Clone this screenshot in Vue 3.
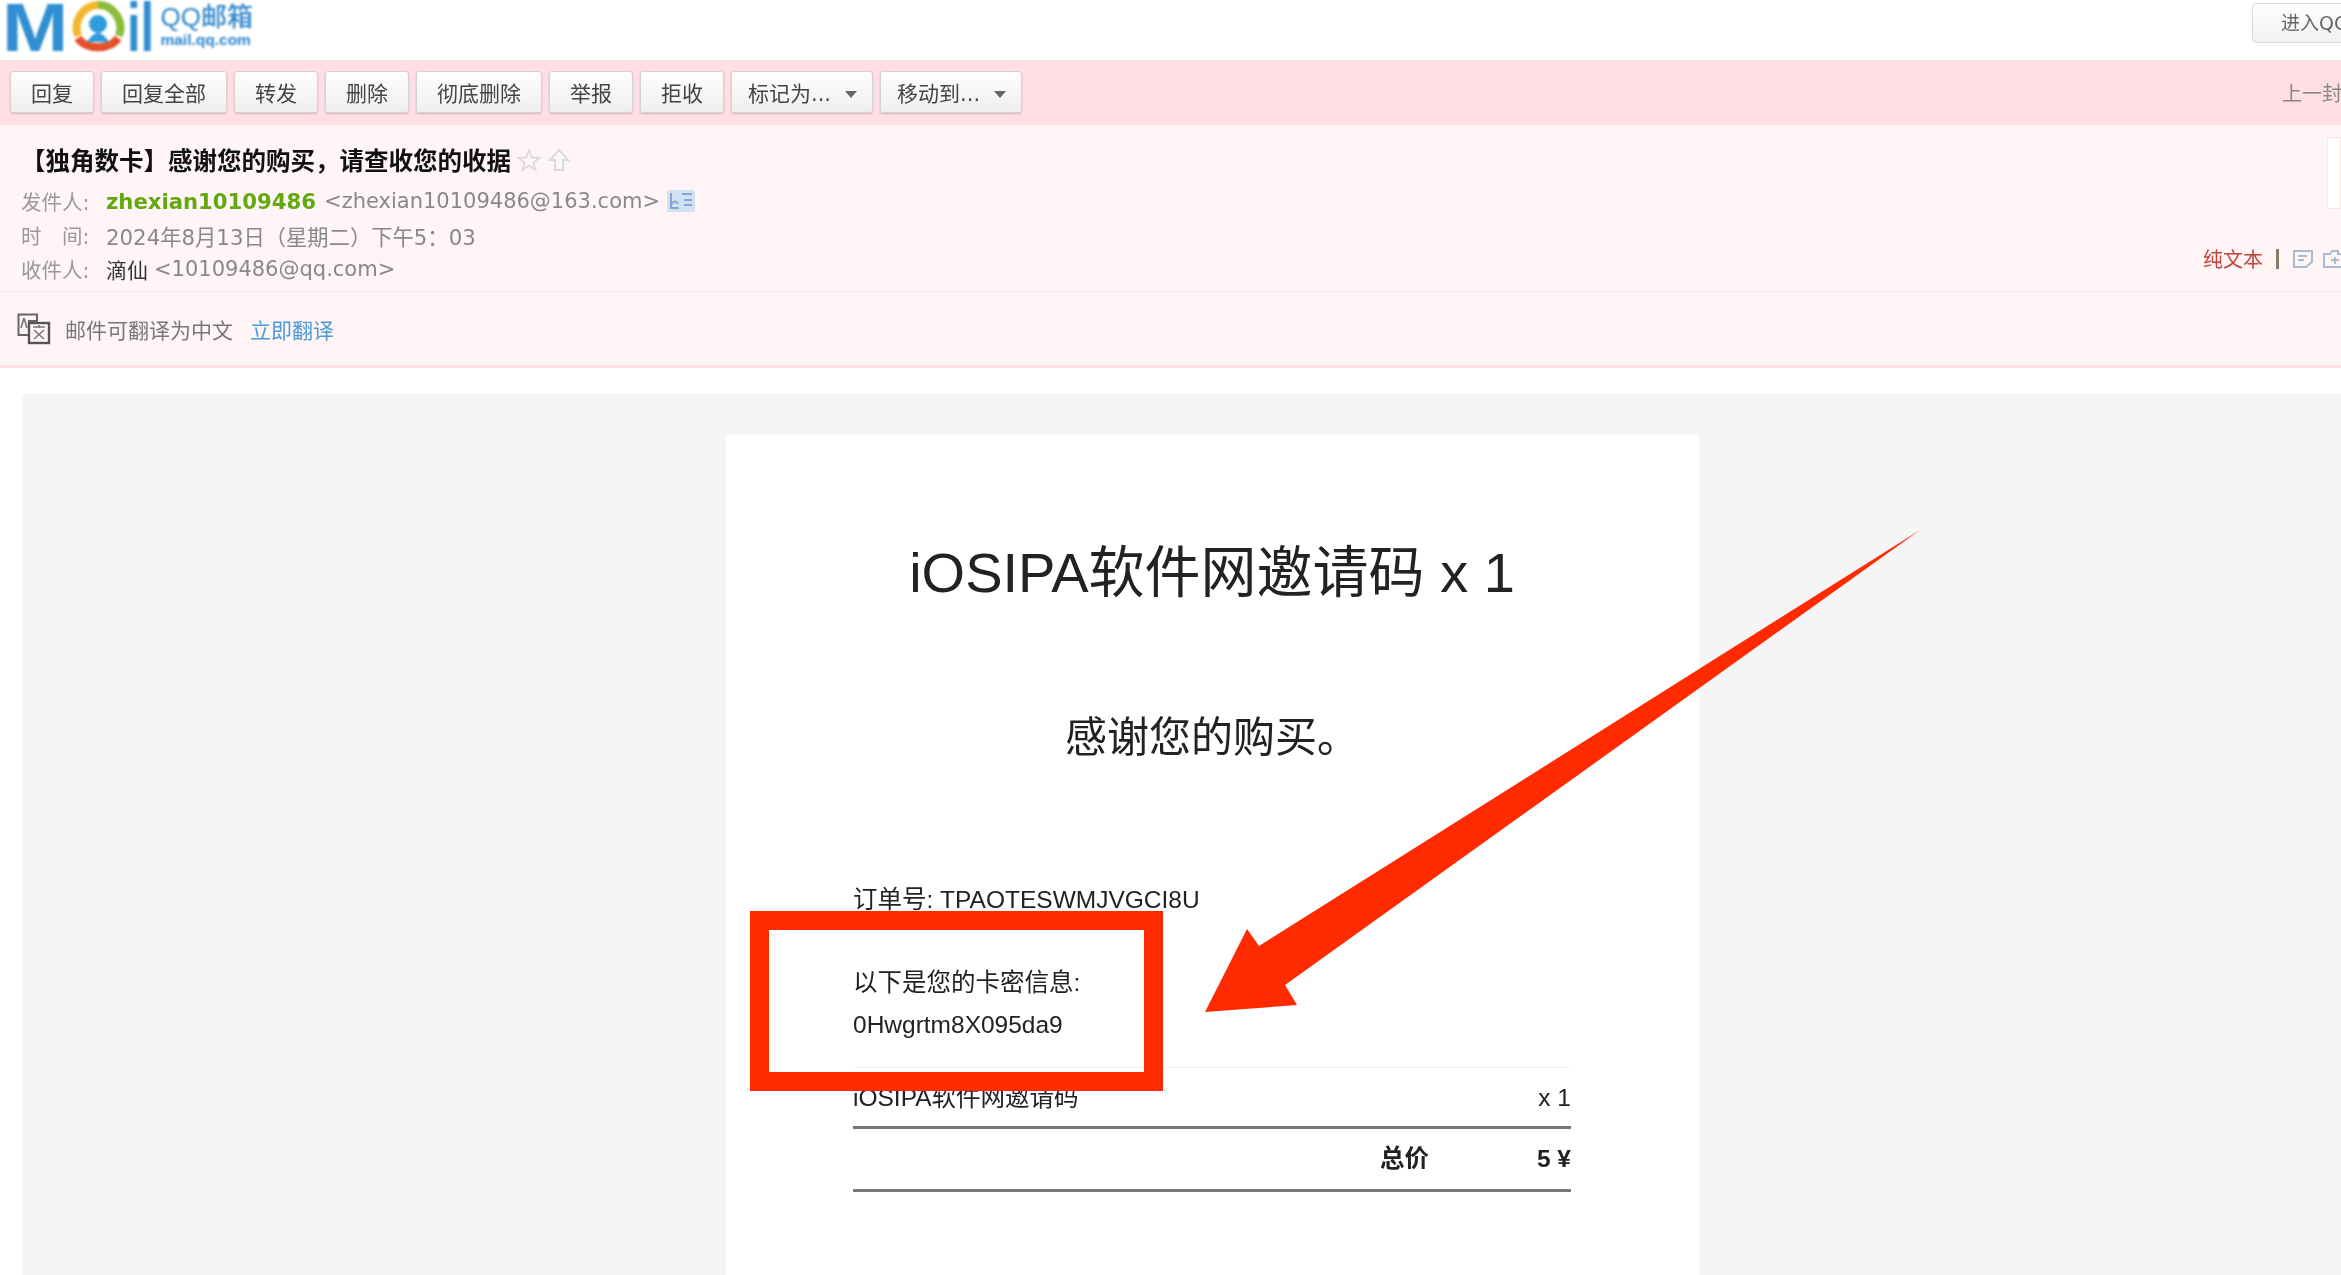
<template>
  <div class="page">
    <!-- Logo row -->
    <header class="top">
      <div class="logo">
        <span class="logo-m">M</span>
        <svg class="logo-ring" width="58" height="56" viewBox="0 0 52 56">
          <path d="M26 5 A22 23 0 0 1 47 36" fill="none" stroke="#8cbb3c" stroke-width="8" />
          <path d="M26 5 A22 23 0 0 0 6 36" fill="none" stroke="#f3b72c" stroke-width="8" />
          <path d="M6 38 A22 16 0 0 0 46 38" fill="none" stroke="#e4502a" stroke-width="8" />
          <circle cx="26" cy="24" r="9" fill="#2f9bdc" />
          <path d="M15 42 Q26 24 37 42 Z" fill="#2f9bdc" />
        </svg>
        <span class="logo-il">il</span>
        <div class="logo-side">
          <div class="logo-name">QQ邮箱</div>
          <div class="logo-url">mail.qq.com</div>
        </div>
      </div>
      <div class="enter-btn">进入QQ邮箱</div>
    </header>

    <!-- Toolbar -->
    <nav class="toolbar">
      <div class="tool-list">
        <button v-for="b in buttons" :key="b.label" class="tool-btn" :class="{ menu: b.menu }">
          {{ b.label }}<i v-if="b.menu" class="caret"></i>
        </button>
      </div>
      <span class="prev">上一封</span>
    </nav>

    <!-- Mail meta -->
    <section class="meta">
      <div class="meta-main">
        <h1 class="subject">
          【独角数卡】感谢您的购买，请查收您的收据
          <svg class="subject-icon" width="26" height="26" viewBox="0 0 24 24">
            <path d="M12 3 L14.6 9.6 L21.5 10 L16.2 14.4 L18 21 L12 17.3 L6 21 L7.8 14.4 L2.5 10 L9.4 9.6 Z" fill="none" stroke="#d9d9d9" stroke-width="1.6" />
          </svg>
          <svg class="subject-icon" width="24" height="26" viewBox="0 0 24 26">
            <path d="M12 3 L21 13 H16 V23 H8 V13 H3 Z" fill="none" stroke="#d4dcdc" stroke-width="2" />
          </svg>
        </h1>
        <div class="meta-row">
          <span class="meta-label">发件人:</span>
          <b class="sender">zhexian10109486</b>
          <span class="addr">&lt;zhexian10109486@163.com&gt;</span>
          <svg class="card-icon" width="28" height="22" viewBox="0 0 28 22">
            <rect width="28" height="22" rx="2" fill="#d3e2f1" />
            <path d="M4 3 V18 H12 M5 14 Q8 9 11 14" fill="none" stroke="#7fa9d4" stroke-width="2" />
            <path d="M15 4 H25 M17 10 H25 M17 15 H25" fill="none" stroke="#7fa9d4" stroke-width="2" />
          </svg>
        </div>
        <div class="meta-row">
          <span class="meta-label">时&emsp;间:</span>
          <span class="when">2024年8月13日（星期二）下午5：03</span>
        </div>
        <div class="meta-row">
          <span class="meta-label">收件人:</span>
          <span class="receiver">滴仙</span>
          <span class="addr-short">&lt;10109486@qq.com&gt;</span>
        </div>
      </div>
      <div class="meta-side">
        <div class="avatar"></div>
        <div class="side-links">
          <span class="plain">纯文本</span>
          <i class="side-sep"></i>
          <svg width="22" height="20" viewBox="0 0 22 20">
            <path d="M2 2 H20 V13 L14 18 H2 Z M6 7 H15 M6 11 H12" fill="none" stroke="#a9bccd" stroke-width="2" />
          </svg>
          <svg width="24" height="20" viewBox="0 0 24 20">
            <path d="M2 5 H8 L10 2 H16 V5 H24 V18 H2 Z M13 8 V15 M9 11 H17" fill="none" stroke="#a9bccd" stroke-width="2" />
          </svg>
        </div>
      </div>
    </section>

    <!-- Translate bar -->
    <section class="translate">
      <svg width="34" height="32" viewBox="0 0 34 32">
        <path d="M1.5 1.5 H20 V8 H12 V22 H1.5 Z" fill="none" stroke="#666" stroke-width="2" />
        <rect x="12" y="10" width="20" height="20" fill="none" stroke="#555" stroke-width="2.4" />
        <path d="M16 14 H28 M22 12 V15 M17 17 L27 26 M27 17 L17 26 M7 5 L4 15 M7 5 L10 15" fill="none" stroke="#777" stroke-width="1.6" />
      </svg>
      <span class="translate-text">邮件可翻译为中文</span>
      <a class="translate-link">立即翻译</a>
    </section>

    <!-- Mail body -->
    <main class="mail-body">
      <article class="card">
        <h2 class="card-title">iOSIPA软件网邀请码 x 1</h2>
        <p class="card-sub">感谢您的购买。</p>
        <p class="order">订单号: TPAOTESWMJVGCI8U</p>
        <div class="secret">
          <div>以下是您的卡密信息:</div>
          <div>0Hwgrtm8X095da9</div>
        </div>
        <div class="line-item">
          <span>iOSIPA软件网邀请码</span>
          <span>x 1</span>
        </div>
        <div class="total">
          <span class="total-label">总价</span>
          <span class="total-value">5 ¥</span>
        </div>
      </article>
    </main>

    <!-- Red annotation drawn over the screenshot -->
    <div class="mark-box"></div>
    <svg class="mark-arrow" width="2341" height="1275" viewBox="0 0 2341 1275">
      <path d="M1920 530 L1259 946 L1247 929 L1205 1012 L1297 1005 L1285 985 Z" fill="#ff2a00" />
    </svg>
  </div>
</template>

<script setup>
const buttons = [
  { label: "回复" },
  { label: "回复全部" },
  { label: "转发" },
  { label: "删除" },
  { label: "彻底删除" },
  { label: "举报" },
  { label: "拒收" },
  { label: "标记为...", menu: true },
  { label: "移动到...", menu: true },
];
</script>

<style>
html,
body {
  margin: 0;
  background: #fff;
}
</style>

<style scoped>
.page {
  position: relative;
  width: 2341px;
  height: 1275px;
  overflow: hidden;
  background: #fff;
  font-family: "DejaVu Sans", "Noto Sans CJK SC", sans-serif;
}

/* Logo row */
.top {
  display: flex;
  justify-content: space-between;
  height: 60px;
  box-sizing: border-box;
}

.logo {
  display: flex;
  align-items: flex-start;
  padding-left: 2px;
  filter: blur(0.9px);
}

.logo-m,
.logo-il {
  display: inline-block;
  font-family: "Liberation Sans", sans-serif;
  font-weight: 700;
  font-size: 68px;
  line-height: 54px;
  color: #2f8fd0;
}

.logo-m {
  margin-right: 10px;
  transform: scaleX(1.17);
  transform-origin: left center;
}

.logo-il {
  margin-right: -10px;
  margin-left: 0;
  transform: scaleX(0.72);
  transform-origin: left center;
}

.logo-side {
  margin-left: 6px;
  color: #2f86cc;
  font-family: "Liberation Sans", "Noto Sans CJK SC", sans-serif;
}

.logo-name {
  margin-top: 3px;
  font-size: 26px;
  font-weight: 500;
  line-height: 28px;
}

.logo-url {
  font-size: 15.5px;
  font-weight: 700;
  line-height: 18px;
}

.enter-btn {
  box-sizing: border-box;
  flex: none;
  width: 120px;
  height: 40px;
  margin-top: 3px;
  margin-right: -31px;
  padding-left: 28px;
  border: 1px solid #ddd;
  border-radius: 4px;
  background: linear-gradient(#fff, #f1f1f1);
  color: #666;
  font-size: 19px;
  line-height: 38px;
  white-space: nowrap;
  overflow: hidden;
  filter: blur(0.6px);
}

/* Toolbar */
.toolbar {
  display: flex;
  align-items: center;
  justify-content: space-between;
  height: 65px;
  padding: 0 0 0 10px;
  background: #ffdfe3;
  overflow: hidden;
}

.tool-list {
  display: flex;
  gap: 7px;
  margin-top: -2px;
  filter: blur(0.7px);
}

.tool-btn {
  height: 42px;
  padding: 0 20px;
  border: 1px solid #d8d0d0;
  border-radius: 3px;
  background: linear-gradient(#fefefe, #efefef);
  box-shadow: 0 1px 2px rgba(0, 0, 0, 0.18);
  color: #444;
  font-family: inherit;
  font-size: 21px;
  white-space: nowrap;
}

.tool-btn.menu {
  padding: 0 15px 0 16px;
}

.caret {
  display: inline-block;
  margin-left: 14px;
  vertical-align: 3px;
  border: 6px solid transparent;
  border-top: 7px solid #666;
  border-bottom: 0;
}

.prev {
  flex: none;
  width: 59px;
  color: #888;
  font-size: 20px;
  white-space: nowrap;
  filter: blur(0.6px);
}

/* Mail meta */
.meta {
  display: flex;
  justify-content: space-between;
  height: 167px;
  box-sizing: border-box;
  border-bottom: 1px solid #f6e8ea;
  background: #fff5f6;
}

.meta-main {
  padding: 20px 0 0 21px;
  color: #888;
  filter: blur(0.7px);
}

.subject {
  display: flex;
  align-items: center;
  margin: 0 0 9px 0;
  color: #111;
  font-family: "Noto Sans CJK SC", sans-serif;
  font-size: 24.5px;
  font-weight: 700;
  line-height: 30px;
  white-space: nowrap;
}

.subject-icon {
  flex: none;
  margin-left: 5px;
}

.meta-row {
  display: flex;
  align-items: center;
  gap: 8px;
  height: 34px;
  font-size: 21px;
  white-space: nowrap;
}

.meta-label {
  width: 77px;
  font-size: 20.5px;
  color: #999;
}

.sender {
  color: #63a80f;
  font-size: 21.2px;
}

.addr {
  font-size: 21px;
}

.card-icon {
  margin-left: -1px;
}

.when {
  font-size: 21.3px;
}

.addr-short {
  margin-left: -2px;
  font-size: 21px;
}

.receiver {
  color: #333;
}

.meta-side {
  display: flex;
  flex-direction: column;
  align-items: flex-end;
  filter: blur(0.5px);
}

.avatar {
  width: 12px;
  height: 70px;
  margin-top: 12px;
  border: 1px solid #fde3e6;
  background: #fff;
}

.side-links {
  display: flex;
  align-items: center;
  gap: 8px;
  width: 138px;
  margin-top: 35px;
  overflow: hidden;
  flex: none;
}

.side-links svg {
  flex: none;
}

.plain {
  flex: none;
  color: #c0453c;
  font-size: 20px;
}

.side-sep {
  flex: none;
  width: 3px;
  height: 20px;
  margin: 0 5px;
  background: #8a7a66;
}

/* Translate bar */
.translate {
  display: flex;
  align-items: center;
  box-sizing: border-box;
  height: 76px;
  padding: 0 0 0 17px;
  border-bottom: 3px solid #ffe0e5;
  background: #fff5f6;
  font-size: 21px;
  filter: blur(0.6px);
}

.translate-text {
  margin-left: 14px;
  color: #777;
}

.translate-link {
  margin-left: 17px;
  color: #4a9ad8;
}

/* Mail body */
.mail-body {
  box-sizing: border-box;
  height: 881px;
  margin: 26px 0 0 22px;
  padding: 41px 0 0 704px;
  background: #f5f5f5;
}

.card {
  box-sizing: border-box;
  width: 973px;
  height: 840px;
  padding: 0 128px 0 127px;
  background: #fff;
  color: #222;
  font-family: "Liberation Sans", "Noto Sans CJK SC", sans-serif;
  filter: blur(0.6px);
}

.card-title {
  margin: 0;
  padding-top: 104px;
  font-size: 56px;
  font-weight: 400;
  line-height: 68px;
  text-align: center;
  white-space: nowrap;
}

.card-sub {
  margin: 103px 0 0;
  font-size: 42px;
  line-height: 56px;
  text-align: center;
}

.order {
  margin: 113px 0 0;
  font-size: 24.5px;
  line-height: 42px;
}

.secret {
  margin-top: 41px;
  font-size: 24.5px;
  line-height: 42px;
}

.line-item {
  display: flex;
  justify-content: space-between;
  margin-top: 21px;
  padding-top: 10px;
  height: 62px;
  box-sizing: border-box;
  border-top: 1px solid #f2f2f2;
  border-bottom: 3px solid #777;
  font-size: 24.5px;
  line-height: 40px;
}

.total {
  display: flex;
  justify-content: flex-end;
  box-sizing: border-box;
  height: 63px;
  border-bottom: 3px solid #777;
  font-size: 24.5px;
  font-weight: 700;
  line-height: 60px;
}

.total-value {
  width: 142px;
  text-align: right;
}

/* Annotation */
.mark-box {
  position: absolute;
  left: 750px;
  top: 911px;
  box-sizing: border-box;
  width: 413px;
  height: 180px;
  border: 19px solid #ff2a00;
}

.mark-arrow {
  position: absolute;
  left: 0;
  top: 0;
}
</style>
